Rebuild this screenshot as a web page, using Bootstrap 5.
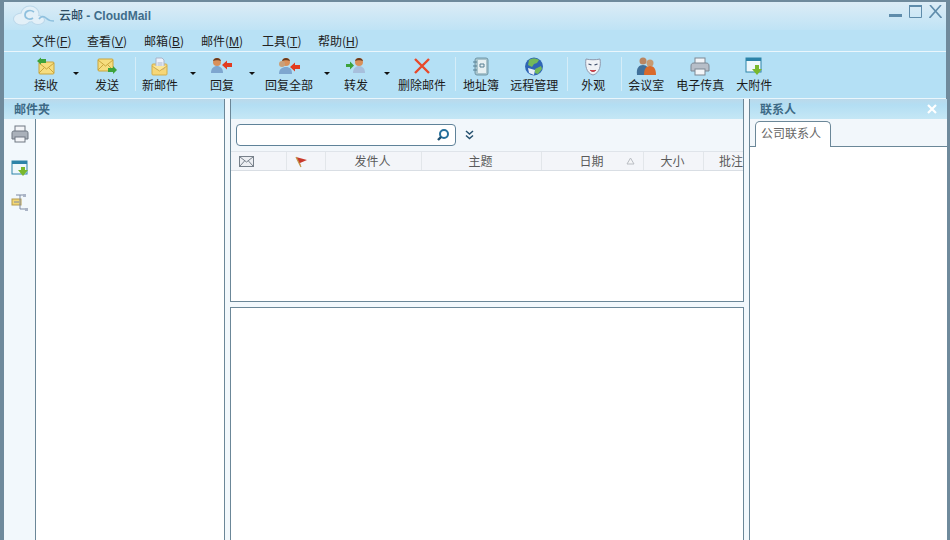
<!DOCTYPE html>
<html lang="zh">
<head>
  <meta charset="UTF-8">
  <title>云邮 - CloudMail</title>
  <link href="https://cdn.jsdelivr.net/npm/bootstrap@5.3.0/dist/css/bootstrap.min.css" rel="stylesheet">
  <style>
    html, body { height: 540px; overflow: hidden; }
    body { font: 12px/16px "Noto Sans CJK SC", "Liberation Sans", sans-serif; color: #1c1c1c; background: #f2f8fc; }
    .win { height: 540px; border: solid #6f8a9c; border-width: 2px 4px 0; }
    .title-bar { height: 28px; background: linear-gradient(#dcecf6, #bfe3f5); padding-left: 9px; }
    .title-text { font-family: "Liberation Sans", "Noto Sans CJK SC", sans-serif; font-size: 12px; color: #3f6d8a; font-weight: 700; margin-left: 4px; margin-top: -2px; }
    .title-text b { color: #2d4d63; font-family: "Noto Sans CJK SC", sans-serif; font-weight: 500; }
    .win-btns { gap: 7px; padding: 3px 4px 0 0; }
    .menu-bar { height: 20px; background: #b8e1f5; padding-left: 28px; padding-top: 1px; border-bottom: 1px solid #eaf6fc; box-sizing: content-box; }
    .menu-bar span { width: 38px; white-space: nowrap; color: #222; }
    .menu-bar span u { font-family: "Liberation Sans", sans-serif; }
    .tool-bar { height: 46px; background: #b4e0f5; padding-left: 30px; border-bottom: 1px solid #e9f6fc; box-sizing: content-box; }
    .tb-btn { flex: none; display: flex; flex-direction: column; align-items: center; white-space: nowrap; height: 46px; padding-top: 5px; }
    .tb-btn svg { display: block; height: 19px; margin-bottom: 1px; }
    .tb-btn span { line-height: 16px; color: #1a1a1a; }
    .tb-drop { flex: none; width: 0; height: 0; border: solid transparent; border-width: 3px 3px 0; border-top-color: #111; margin-top: 20px; }
    .tb-sep { flex: none; width: 1px; height: 34px; background: #d5edf8; margin-top: 5px; }
    .l6 { margin-left: 6px; } .l7 { margin-left: 7px; } .l8 { margin-left: 8px; } .l9 { margin-left: 9px; }
    .l10 { margin-left: 10px; } .l11 { margin-left: 11px; } .l12 { margin-left: 12px; } .l13 { margin-left: 13px; }
    .l14 { margin-left: 14px; } .l15 { margin-left: 15px; } .l16 { margin-left: 16px; }
    .l17 { margin-left: 17px; } .l18 { margin-left: 18px; } .l19 { margin-left: 19px; } .l23 { margin-left: 23px; }
    .work { height: 441px; }
    .left-side { width: 221px; flex: none; border-right: 1px solid #6b8798; }
    .mid-side { width: 514px; flex: none; margin-left: 5px; }
    .right-side { width: 198px; flex: none; margin-left: 5px; border-left: 1px solid #6b8798; }
    .pane-head { height: 20px; flex: none; background: linear-gradient(#bcd9ea, #b3def3 30%, #c5e7f5); font-weight: 700; color: #3d6a86; line-height: 20px; font-size: 12px; }
    .left-head { padding-left: 10px; }
    .right-head { padding: 0 10px; }
    .strip { width: 32px; flex: none; background: #f2f8fc; border-right: 1px solid #6b8798; padding-top: 6px; gap: 15px; }
    .sheet { background: #fff; }
    .mid-pane { border: 1px solid #6b8798; border-top: 0; background: #fff; }
    .mid-top { height: 203px; flex: none; }
    .mid-bottom { margin-top: 5px; border-top: 1px solid #6b8798; border-bottom: 0; }
    .search-row { height: 32px; background: #f2f7fb; padding-left: 5px; }
    .search-box { width: 220px; height: 22px; background: #fff; border: 1px solid #5f8299; border-radius: 4px; padding-right: 5px; }
    .more { margin-left: 9px; }
    .list-head { display: grid; grid-template-columns: 56px 39px 96px 120px 102px 60px 56px; height: 20px; background: #f3f5f9; border-top: 1px solid #dfe4ea; border-bottom: 1px solid #d9dee4; color: #5a5a5a; overflow: hidden; line-height: 18px; }
    .list-head > div { border-right: 1px solid #e2e6ea; white-space: nowrap; text-align: center; position: relative; padding-right: 2px; }
    .list-head > div:last-child { border-right: 0; text-align: left; padding-left: 15px; }
    .sort-mark { position: absolute; right: 8px; top: 5px; }
    .tab-row { height: 28px; flex: none; background: #f2f7fb; border-bottom: 1px solid #6b8798; padding-left: 5px; padding-top: 2px; }
    .tab-item { width: 76px; height: 26px; background: #fff; border: 1px solid #6b8798; border-bottom: 0; border-radius: 5px 5px 0 0; color: #666; padding-left: 5px; line-height: 22px; }
  </style>
</head>
<body>
  <div class="win d-flex flex-column">
    <div class="title-bar d-flex align-items-center justify-content-between">
      <div class="d-flex align-items-center">
        <svg width="42" height="22" viewBox="0 0 42 22"><g fill="#bcd8ea"><ellipse cx="9" cy="14" rx="9" ry="6.500"/><ellipse cx="17" cy="9" rx="9.500" ry="8.500"/><ellipse cx="25" cy="15" rx="7" ry="5"/></g><g fill="#e3f0f8"><ellipse cx="9" cy="14" rx="8" ry="5.500"/><ellipse cx="17" cy="9" rx="8.500" ry="7.500"/><ellipse cx="25" cy="15" rx="6" ry="4"/></g><path d="M21 7c-4-3-9-1-9 3s5 5 8 3M26 14c2-3 5-3 7-1s4 3 8 3" fill="none" stroke="#8fc0de" stroke-width="1.700"/></svg>
        <div class="title-text"><b>云邮</b> - CloudMail</div>
      </div>
      <div class="win-btns d-flex align-self-start">
        <svg width="13" height="13" viewBox="0 0 13 13"><rect y="9" width="13" height="3" fill="#5f8cab"/></svg>
        <svg width="13" height="13" viewBox="0 0 13 13"><path d="M.5.5h12v12H.5z" fill="none" stroke="#5f8cab"/><rect width="13" height="2" fill="#5f8cab"/></svg>
        <svg width="13" height="13" viewBox="0 0 13 13"><path d="M1 0l11.500 13M12 0L.5 13" stroke="#5f8cab" stroke-width="1.600"/></svg>
      </div>
    </div>

    <div class="menu-bar d-flex align-items-center">
      <span>文件(<u>F</u>)</span><span class="l17">查看(<u>V</u>)</span><span class="l19">邮箱(<u>B</u>)</span><span class="l19">邮件(<u>M</u>)</span><span class="l23">工具(<u>T</u>)</span><span class="l18">帮助(<u>H</u>)</span>
    </div>

    <div class="tool-bar d-flex">
      <div class="tb-btn"><svg width="24" height="19" viewBox="0 0 24 19"><rect x="5" y="5" width="15" height="12" rx="1" fill="#f6dd7e" stroke="#c9a53c"/><path d="M5 6l7.500 6L20 6M5 16l5-5M20 16l-5-5" fill="none" stroke="#c9a53c"/><path d="M3 4l4-3.500V2h5v4H7v1.500z" fill="#3ca33c"/></svg><span>接收</span></div>
      <div class="tb-drop l15"></div>
      <div class="tb-btn l16"><svg width="24" height="19" viewBox="0 0 24 19"><rect x="3" y="2" width="15" height="12" rx="1" fill="#f6dd7e" stroke="#c9a53c"/><path d="M3 3l7.500 6L18 3M3 13l5-5M18 13l-5-5" fill="none" stroke="#c9a53c"/><path d="M22 13l-4 4v-2h-5v-4h5V9z" fill="#3ca33c"/></svg><span>发送</span></div>
      <div class="tb-sep l16"></div>
      <div class="tb-btn l6"><svg width="24" height="19" viewBox="0 0 24 19"><rect x="4" y="7" width="15" height="11" rx="1" fill="#f6d777" stroke="#d3ad4b"/><path d="M8 1h6l2 2v9H8z" fill="#eef2fa" stroke="#a9b4c8"/><path d="M9.500 6h5M9.500 8h5" stroke="#a9b4c8"/><path d="M4 9l7.500 5L19 9" fill="#fbe79c" stroke="#d3ad4b"/></svg><span>新邮件</span></div>
      <div class="tb-drop l12"></div>
      <div class="tb-btn l14"><svg width="24" height="19" viewBox="0 0 24 19"><circle cx="7" cy="5" r="4" fill="#d9905a"/><path d="M3 4c1-4 7-4 8 0-2-1-6-1-8 0z" fill="#6a3a1c"/><path d="M1 16c0-5 3-7 6-7s6 2 6 7z" fill="#7ea6cf"/><path d="M22 6v4h-5v2.500L12 8l5-4.500V6z" fill="#e23b1f"/></svg><span>回复</span></div>
      <div class="tb-drop l15"></div>
      <div class="tb-btn l10"><svg width="24" height="19" viewBox="0 0 24 19"><circle cx="9" cy="5" r="4" fill="#d9905a"/><circle cx="5" cy="7" r="3" fill="#c9a07a"/><path d="M5 4c1-4 7-4 8 0-2-1-6-1-8 0z" fill="#6a3a1c"/><path d="M2 17c0-5 3-7 7-7s6 2 6 7z" fill="#7ea6cf"/><path d="M23 8v4h-5v2.500L13 10l5-4.500V8z" fill="#e23b1f"/></svg><span>回复全部</span></div>
      <div class="tb-drop l11"></div>
      <div class="tb-btn l14"><svg width="24" height="19" viewBox="0 0 24 19"><circle cx="15" cy="5" r="4" fill="#d9905a"/><path d="M11 4c1-4 7-4 8 0-2-1-6-1-8 0z" fill="#6a3a1c"/><path d="M9 16c0-5 3-7 6-7s6 2 6 7z" fill="#a7bfdc"/><path d="M2 7v3h4v2.500L10 8.500 6 4.500V7z" fill="#3ca33c"/></svg><span>转发</span></div>
      <div class="tb-drop l16"></div>
      <div class="tb-btn l8"><svg width="24" height="19" viewBox="0 0 24 19"><path d="M5 2l14 14M19 2L5 16" stroke="#e8492a" stroke-width="2.400"/></svg><span>删除邮件</span></div>
      <div class="tb-sep l9"></div>
      <div class="tb-btn l7"><svg width="24" height="19" viewBox="0 0 24 19"><rect x="6" y="1" width="13" height="17" rx="2" fill="#a9c4cc" stroke="#6f97a8"/><rect x="9" y="3" width="8" height="13" fill="#e7f0f2"/><path d="M11 7h4v3h-4zM4 5h4M4 9h4M4 13h4" fill="none" stroke="#577f92"/></svg><span>地址簿</span></div>
      <div class="tb-btn l11"><svg width="24" height="19" viewBox="0 0 24 19"><circle cx="12" cy="9.500" r="9" fill="#2f65b5"/><path d="M7 3c3-2 7-2 10 0l-2 3-3 1-2 3-4-2zM13 12l6-3 1 3-4 5-3-1z" fill="#72b85a"/><path d="M6 11l7 2-1 5-5-2z" fill="#e6edf6"/></svg><span>远程管理</span></div>
      <div class="tb-sep l9"></div>
      <div class="tb-btn l13"><svg width="24" height="19" viewBox="0 0 24 19"><path d="M5 2c4 1 10 1 14 0 1 6 0 14-7 16C5 16 4 8 5 2z" fill="#f0f2f6" stroke="#8d98ad"/><path d="M7.500 7l3 1M13.500 8l3-1" stroke="#3a4a68" stroke-width="1.300"/><path d="M9 13c2 2 4 2 6 0" fill="#d8434a" stroke="#b0323a"/></svg><span>外观</span></div>
      <div class="tb-sep l16"></div>
      <div class="tb-btn l6"><svg width="24" height="19" viewBox="0 0 24 19"><circle cx="9" cy="4" r="3.500" fill="#b98662"/><path d="M3 18c-1-7 2-10 6-10s6 3 5 10z" fill="#41709a"/><circle cx="16" cy="6" r="3.500" fill="#c79a70"/><path d="M10 18c0-6 2-9 6-9s6 3 6 9z" fill="#d96a2b"/></svg><span>会议室</span></div>
      <div class="tb-btn l12"><svg width="24" height="19" viewBox="0 0 24 19"><rect x="7" y="1" width="10" height="6" fill="#f3f5f8" stroke="#7d8793"/><path d="M6 6h12c2 0 3 1 3 3v5H3V9c0-2 1-3 3-3z" fill="#b7bec8" stroke="#7d8793"/><rect x="7" y="12" width="10" height="6" fill="#f3f5f8" stroke="#7d8793"/></svg><span>电子传真</span></div>
      <div class="tb-btn l12"><svg width="24" height="19" viewBox="0 0 24 19"><rect x="4" y="1" width="15" height="14" fill="#eef7fb" stroke="#2c83a8"/><rect x="4" y="1" width="15" height="3" fill="#2c83a8"/><path d="M13 8h4v4h3l-5 6-5-6h3z" fill="#79b82d"/></svg><span>大附件</span></div>
    </div>

    <div class="work d-flex">
      <div class="left-side d-flex flex-column">
        <div class="pane-head left-head">邮件夹</div>
        <div class="d-flex flex-grow-1">
          <div class="strip d-flex flex-column align-items-center">
            <svg width="18" height="19" viewBox="0 0 18 19"><rect x="4" y="1" width="10" height="6" fill="#f3f5f8" stroke="#6e7781"/><path d="M3 6h12c2 0 2 1 2 3v5H1V9c0-2 0-3 2-3z" fill="#aab1ba" stroke="#6e7781"/><rect x="4" y="12" width="10" height="5" fill="#f3f5f8" stroke="#6e7781"/></svg>
            <svg width="18" height="19" viewBox="0 0 18 19"><rect x="1" y="2" width="15" height="13" fill="#eef7fb" stroke="#2c83a8"/><rect x="1" y="2" width="15" height="3" fill="#2c83a8"/><path d="M10 8h4v3h3l-5 6-5-6h3z" fill="#79b82d"/></svg>
            <svg width="18" height="19" viewBox="0 0 18 19"><rect x="1" y="6" width="9" height="6" fill="#f3d774" stroke="#b49a4c"/><path d="M3 9h5M5 2h8M9 2v14M9 16h6" fill="none" stroke="#7f8ba3"/><rect x="12" y="1" width="3" height="3" fill="#aab4c6"/><rect x="14" y="15" width="3" height="3" fill="#aab4c6"/></svg>
          </div>
          <div class="sheet flex-grow-1"></div>
        </div>
      </div>

      <div class="mid-side d-flex flex-column">
        <div class="mid-pane mid-top d-flex flex-column">
          <div class="pane-head"></div>
          <div class="search-row d-flex align-items-center">
            <div class="search-box d-flex align-items-center justify-content-end">
              <svg width="14" height="14" viewBox="0 0 14 14"><circle cx="8" cy="6" r="4" fill="none" stroke="#246f9c" stroke-width="2"/><path d="M5 9l-3 3" stroke="#1d4f70" stroke-width="2.400"/></svg>
            </div>
            <svg class="more" width="9" height="10" viewBox="0 0 9 10"><path d="M1 1l3.500 3L8 1M1 5.500l3.500 3 3.500-3" fill="none" stroke="#24506e" stroke-width="1.500"/></svg>
          </div>
          <div class="list-head">
            <div class="text-start ps-2"><svg class="mt-1 d-block" width="15" height="11" viewBox="0 0 15 11"><rect x=".5" y=".5" width="14" height="10" fill="#eceef2" stroke="#77808a"/><path d="M1 1l6.500 5L14 1M1 10l4.500-5M14 10L9.500 5" fill="none" stroke="#77808a"/></svg></div>
            <div class="text-start"><svg class="ms-2 mt-1 d-block" width="13" height="12" viewBox="0 0 13 12"><path d="M1 1l11 3-7 3 1 4z" fill="#c9392c"/><path d="M1 1l5 10" stroke="#c29a4a" stroke-width="1.300"/></svg></div>
            <div>发件人</div>
            <div>主题</div>
            <div>日期<svg class="sort-mark" width="9" height="8" viewBox="0 0 9 8"><path d="M4.500 1L8 7H1z" fill="#f4f5f7" stroke="#b9bdc3"/></svg></div>
            <div>大小</div>
            <div>批注</div>
          </div>
          <div class="flex-grow-1"></div>
        </div>
        <div class="mid-pane mid-bottom flex-grow-1"></div>
      </div>

      <div class="right-side d-flex flex-column">
        <div class="pane-head right-head d-flex justify-content-between align-items-center">
          <span>联系人</span>
          <svg width="10" height="10" viewBox="0 0 10 10"><path d="M1 1l8 8M9 1L1 9" stroke="#fff" stroke-width="2.200"/></svg>
        </div>
        <div class="tab-row d-flex"><div class="tab-item">公司联系人</div></div>
        <div class="sheet flex-grow-1"></div>
      </div>
    </div>
  </div>
  <script src="https://cdn.jsdelivr.net/npm/bootstrap@5.3.0/dist/js/bootstrap.bundle.min.js"></script>
</body>
</html>
